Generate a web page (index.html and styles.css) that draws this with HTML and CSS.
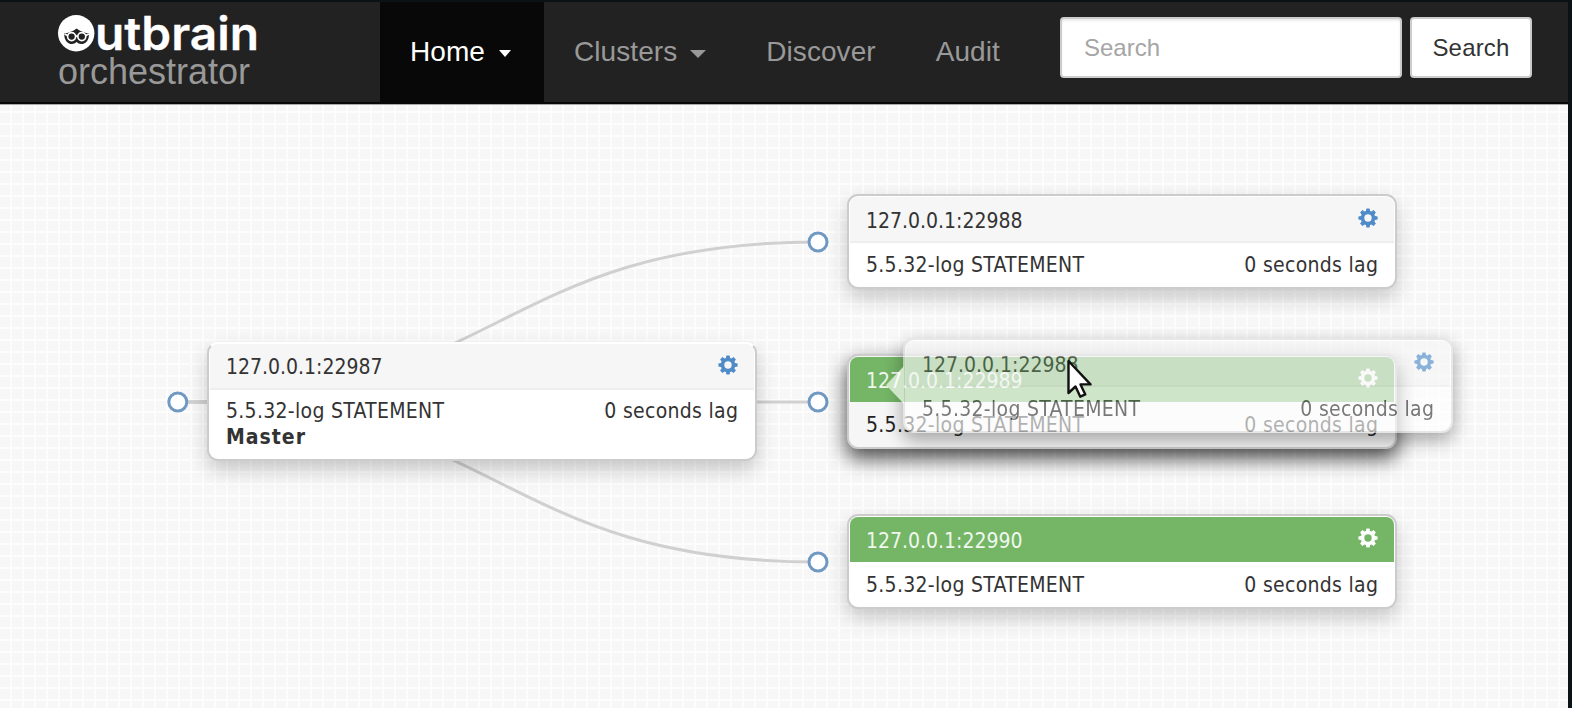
FILE: index.html
```
<!DOCTYPE html>
<html lang="en">
<head>
<meta charset="utf-8">
<title>orchestrator</title>
<link rel="stylesheet" href="styles.css">
</head>
<body>
<svg class="defs" aria-hidden="true">
  <symbol id="gear" viewBox="0 0 20 20">
    <path fill="currentColor" fill-rule="evenodd" d="M8.400 .4h3.200l.5 2.600 1.300.6 2.200-1.500 2.300 2.300-1.500 2.200.6 1.300 2.600.5v3.200l-2.600.5-.6 1.300 1.500 2.200-2.300 2.300-2.200-1.500-1.300.6-.5 2.600H8.400l-.5-2.600-1.300-.6-2.200 1.500-2.300-2.300 1.500-2.200-.6-1.300-2.600-.5V8.400l2.600-.5.6-1.300-1.500-2.200 2.300-2.300 2.200 1.500 1.300-.6zM10 6.300a3.700 3.700 0 1 0 0 7.400 3.700 3.700 0 0 0 0-7.400z"/>
  </symbol>
</svg>
<div class="window">
  <header class="navbar">
    <a class="brand">
      <svg class="logo" width="204" height="44" viewBox="0 0 204 44">
        <circle cx="18.200" cy="25.200" r="18.200" fill="#fff"/>
        <path d="M6 25.500q7-.8 12.600-5 5.600 4.200 12.600 5-.5 9-6.500 10.500-4 .5-6.100-2-2.100 2.500-6.100 2-6-1.500-6.500-10.500z" fill="#222"/>
        <g fill="none" stroke="#fff" stroke-width="1.700"><circle cx="13.600" cy="28.600" r="4"/><circle cx="23.800" cy="28.600" r="4"/><path d="M17.500 28.200h2.300M6.500 26l3.200 1.500M30.900 26l-3.200 1.500"/></g>
        <text class="wordmark" x="37" y="42.300" textLength="164" lengthAdjust="spacingAndGlyphs">utbrain</text>
      </svg>
      <span class="product">orchestrator</span>
    </a>
    <nav class="menu">
      <a class="item active">Home<i class="caret small"></i></a>
      <a class="item">Clusters<i class="caret"></i></a>
      <a class="item">Discover</a>
      <a class="item">Audit</a>
    </nav>
    <form class="search">
      <input class="field" type="text" placeholder="Search">
      <button class="button" type="button">Search</button>
    </form>
  </header>
  <main class="canvas">
    <svg class="links" width="1568" height="604" viewBox="0 104 1568 604">
      <g class="link"><path d="M178 402C498 402 498 242 818 242"/><path d="M178 402H818"/><path d="M178 402C498 402 498 562 818 562"/></g>
      <g class="dot"><circle cx="177.800" cy="402" r="9"/><circle cx="818" cy="242" r="9"/><circle cx="818" cy="402" r="9"/><circle cx="818" cy="562" r="9"/></g>
    </svg>
    <section class="node master">
      <h3 class="head"><span class="host">127.0.0.1:22987</span><svg class="gear"><use href="#gear"/></svg></h3>
      <div class="body"><span class="version">5.5.32-log STATEMENT</span><span class="lag">0 seconds lag</span></div>
      <strong class="role">Master</strong>
    </section>
    <section class="node first">
      <h3 class="head"><span class="host">127.0.0.1:22988</span><svg class="gear"><use href="#gear"/></svg></h3>
      <div class="body"><span class="version">5.5.32-log STATEMENT</span><span class="lag">0 seconds lag</span></div>
    </section>
    <section class="node second ok target">
      <h3 class="head"><span class="host">127.0.0.1:22989</span><svg class="gear"><use href="#gear"/></svg></h3>
      <div class="body"><span class="version">5.5.32-log STATEMENT</span><span class="lag">0 seconds lag</span></div>
    </section>
    <section class="node third ok">
      <h3 class="head"><span class="host">127.0.0.1:22990</span><svg class="gear"><use href="#gear"/></svg></h3>
      <div class="body"><span class="version">5.5.32-log STATEMENT</span><span class="lag">0 seconds lag</span></div>
    </section>
    <section class="node dragged">
      <h3 class="head"><span class="host">127.0.0.1:22988</span><svg class="gear"><use href="#gear"/></svg></h3>
      <div class="body"><span class="version">5.5.32-log STATEMENT</span><span class="lag">0 seconds lag</span></div>
    </section>
    <svg class="cursor" width="28" height="42" viewBox="0 0 28 42">
      <path d="M2.500 2v32l7-6.500 4.800 10.200 5-2.300-4.800-10h10z" fill="#fff" stroke="#111" stroke-width="2.400" stroke-linejoin="round"/>
    </svg>
  </main>
</div>
</body>
</html>
```

FILE: styles.css
```
* { box-sizing: border-box; }
body {
  margin: 0;
  width: 1572px;
  height: 708px;
  overflow: hidden;
  background: #0b1216;
  font-family: "Liberation Sans", sans-serif;
}
.defs { position: absolute; width: 0; height: 0; }
.window { width: 1568px; height: 708px; padding-top: 2px; overflow: hidden; }

.navbar {
  display: flex;
  height: 102px;
  padding-left: 58px;
  background: #222;
  border-bottom: 2px solid #080808;
}
.brand { display: flex; flex-direction: column; width: 322px; padding-top: 6px; }
.logo { display: block; overflow: visible; }
.wordmark { font: 600 46px Inter, sans-serif; fill: #fff; stroke: #fff; stroke-width: .3px; stroke-linejoin: round; }
.product { font-size: 36px; line-height: 40px; color: #999; }
.menu { display: flex; }
.item {
  display: flex;
  align-items: center;
  padding: 0 30px;
  font-size: 28px;
  line-height: 100px;
  letter-spacing: .07px;
  color: #999;
}
.item.active { width: 164px; background: #080808; color: #fff; }
.caret {
  margin: 4px 0 0 13px;
  border: 8px solid transparent;
  border-top-color: currentColor;
  border-bottom-width: 0;
}
.caret.small { margin: 3px 0 0 14px; border-width: 7px 6px 0; }
.search { display: flex; gap: 8px; margin: 15px 0 0 auto; padding-right: 36px; }
.field, .button {
  height: 61px;
  border: 2px solid #ccc;
  border-radius: 4px;
  background: #fff;
  font: 24px "Liberation Sans", sans-serif;
}
.field { width: 342px; padding: 0 22px; box-shadow: inset 0 2px 2px rgba(0, 0, 0, .08); }
.field::placeholder { color: #a5a5a5; opacity: 1; }
.button { width: 122px; padding: 0; letter-spacing: .2px; color: #333; }

.canvas {
  position: relative;
  height: 604px;
  background-color: #f7f7f7;
  background-image:
    linear-gradient(#aaa, #aaa),
    linear-gradient(90deg, transparent 9.500px, #fdfdfd 10.500px),
    linear-gradient(transparent 9.500px, #fdfdfd 10.500px);
  background-size: 100% 1px, 12px 12px, 12px 12px;
  background-position: 0 0, 0 0, 0 9px;
  background-repeat: no-repeat, repeat, repeat;
}
.links { position: absolute; left: 0; top: 0; }
.link { fill: none; stroke: #d0d0d0; stroke-width: 3; }
.dot { fill: #fff; stroke: #6f99c3; stroke-width: 3; }

.node {
  position: absolute;
  left: 847px;
  width: 550px;
  height: 95px;
  padding: 1px;
  border: 2px solid #ccc;
  border-radius: 11px;
  background: #fff;
  box-shadow: 0 9px 20px rgba(0, 0, 0, .2);
  font: 21px/26px "DejaVu Sans Condensed", "DejaVu Sans", sans-serif;
  font-stretch: condensed;
  color: #333;
}
.first { top: 90px; }
.second { top: 250px; }
.third { top: 410px; }
.master { left: 207px; top: 238px; height: 119px; padding-top: 0; border-top-color: #fff; }
.head {
  display: flex;
  align-items: center;
  justify-content: space-between;
  height: 46px;
  margin: 0;
  padding: 0 16px;
  border-bottom: 2px solid #eee;
  border-radius: 8px 8px 0 0;
  background: #f6f6f6;
  font: inherit;
}
.host { padding-top: 3px; }
.gear { width: 20px; height: 20px; margin-top: -3px; color: #4f8bc9; }
.body { display: flex; justify-content: space-between; padding: 9px 16px 0; }
.version { letter-spacing: .3px; }
.lag { letter-spacing: .3px; margin-right: -.3px; }
.master .body { padding-top: 8px; }
.master .host { padding-top: 2px; }
.role { display: block; padding-left: 16px; letter-spacing: 1px; }
.ok .head { height: 45px; background: #74b566; border-bottom: 0; color: #f0f7ee; }
.ok .host { padding-top: 2px; }
.ok .body { padding-top: 10px; }
.ok .gear { color: #fff; }
.target {
  border-color: #ccc;
  background: #f6f6f6;
  box-shadow: 0 9px 20px 1px rgba(0, 0, 0, .68);
  color: #222;
}
.dragged {
  left: 903px;
  top: 234px;
  border-color: #ddd;
  opacity: .65;
  box-shadow: 0 7px 18px 1px rgba(0, 0, 0, .5);
}
.dragged::before {
  content: "";
  position: absolute;
  left: -19px;
  top: 26px;
  width: 18px;
  height: 38px;
  background: #fff;
  clip-path: polygon(0 50%, 100% 0, 100% 100%);
}
.cursor { position: absolute; left: 1066px; top: 255px; }
```
